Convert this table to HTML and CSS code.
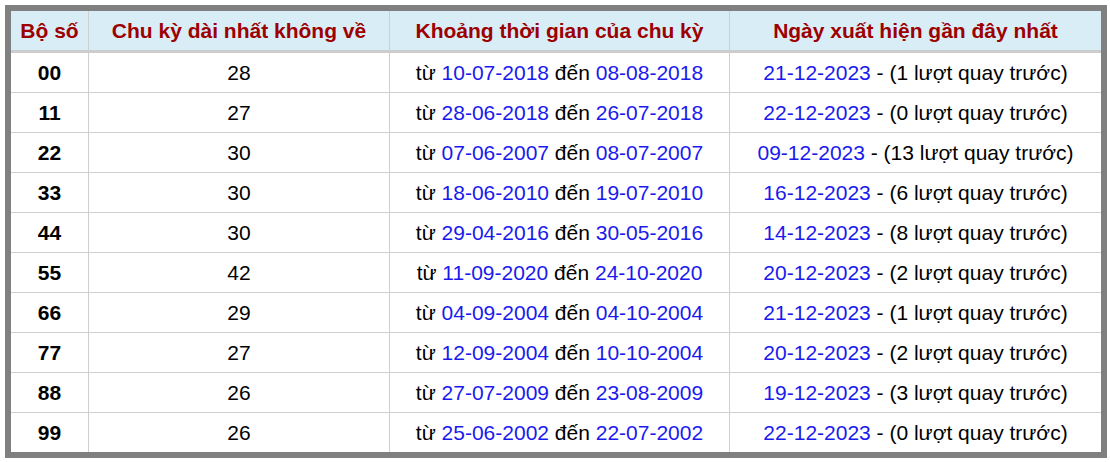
FILE: index.html
```html
<!DOCTYPE html>
<html lang="vi">
<head>
<meta charset="utf-8">
<link rel="stylesheet" href="styles.css">
</head>
<body>
<div class="frame">
<table class="cycle">
<thead>
<tr><th class="c1">Bộ số</th><th class="c2">Chu kỳ dài nhất không về</th><th class="c3">Khoảng thời gian của chu kỳ</th><th class="c4">Ngày xuất hiện gần đây nhất</th></tr>
</thead>
<tbody>
<tr><td class="num">00</td><td>28</td><td>từ <span class="d">10-07-2018</span> đến <span class="d">08-08-2018</span></td><td><span class="d">21-12-2023</span> - (1 lượt quay trước)</td></tr>
<tr><td class="num">11</td><td>27</td><td>từ <span class="d">28-06-2018</span> đến <span class="d">26-07-2018</span></td><td><span class="d">22-12-2023</span> - (0 lượt quay trước)</td></tr>
<tr><td class="num">22</td><td>30</td><td>từ <span class="d">07-06-2007</span> đến <span class="d">08-07-2007</span></td><td><span class="d">09-12-2023</span> - (13 lượt quay trước)</td></tr>
<tr><td class="num">33</td><td>30</td><td>từ <span class="d">18-06-2010</span> đến <span class="d">19-07-2010</span></td><td><span class="d">16-12-2023</span> - (6 lượt quay trước)</td></tr>
<tr><td class="num">44</td><td>30</td><td>từ <span class="d">29-04-2016</span> đến <span class="d">30-05-2016</span></td><td><span class="d">14-12-2023</span> - (8 lượt quay trước)</td></tr>
<tr><td class="num">55</td><td>42</td><td>từ <span class="d">11-09-2020</span> đến <span class="d">24-10-2020</span></td><td><span class="d">20-12-2023</span> - (2 lượt quay trước)</td></tr>
<tr><td class="num">66</td><td>29</td><td>từ <span class="d">04-09-2004</span> đến <span class="d">04-10-2004</span></td><td><span class="d">21-12-2023</span> - (1 lượt quay trước)</td></tr>
<tr><td class="num">77</td><td>27</td><td>từ <span class="d">12-09-2004</span> đến <span class="d">10-10-2004</span></td><td><span class="d">20-12-2023</span> - (2 lượt quay trước)</td></tr>
<tr><td class="num">88</td><td>26</td><td>từ <span class="d">27-07-2009</span> đến <span class="d">23-08-2009</span></td><td><span class="d">19-12-2023</span> - (3 lượt quay trước)</td></tr>
<tr><td class="num">99</td><td>26</td><td>từ <span class="d">25-06-2002</span> đến <span class="d">22-07-2002</span></td><td><span class="d">22-12-2023</span> - (0 lượt quay trước)</td></tr>
</tbody>
</table>
</div>
</body>
</html>
```
FILE: styles.css
```css
html, body { margin: 0; padding: 0; background: #fff; }
body { padding: 5px 4px 4px 5px; font-family: "Liberation Sans", Arial, sans-serif; }
.frame {
  width: 1090px;
  border: 6px solid #808080;
  background: #fff;
}
.cycle {
  width: 100%;
  border-collapse: collapse;
  table-layout: fixed;
  font-size: 21px;
  color: #000;
}
.cycle th {
  background: #d9edf7;
  color: #9c0000;
  font-weight: bold;
  height: 39px;
  padding: 0;
  text-align: center;
  border-left: 1px solid #cfcfcf;
  border-bottom: 3px solid #cccccc;
}
.cycle td {
  height: 39px;
  padding: 0;
  text-align: center;
  border-left: 1px solid #cfcfcf;
  border-top: 1px solid #cfcfcf;
  white-space: nowrap;
}
.cycle th:first-child, .cycle td:first-child { border-left: none; }
.cycle tbody tr:first-child td { border-top: none; }
.c1 { width: 77px; }
.c2 { width: 300px; }
.c3 { width: 339px; }
.num { font-weight: bold; color: #000; }
.d { color: #1a1aee; }
```
